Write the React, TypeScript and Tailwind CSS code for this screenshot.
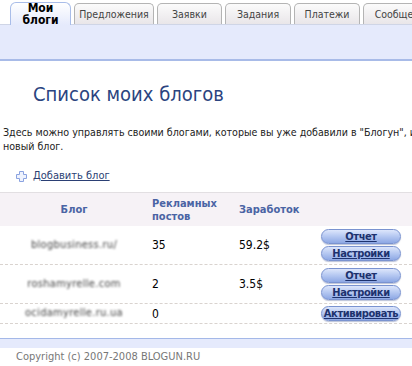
import React from "react";

const tabs = ["Предложения", "Заявки", "Задания", "Платежи", "Сообщения"];

const rows = [
  { name: "blogbusiness.ru/", posts: "35", money: "59.2$", active: true },
  { name: "roshamyrelle.com", posts: "2", money: "3.5$", active: true },
  { name: "ocidamyrelle.ru.ua", posts: "0", money: "", active: false },
];

function PillButton({ label }: { label: string }) {
  return (
    <a
      href="#"
      className="flex h-[15px] w-[80px] items-center justify-center rounded-full border border-[#7a93d0] bg-gradient-to-b from-[#dde6fb] via-[#b4c7f1] to-[#8ea8e4] text-[11px] leading-none font-bold tracking-[-0.4px] text-[#1d326e] underline shadow-[0_1px_1px_rgba(60,80,140,0.35)] [font-family:'DejaVu_Sans_Condensed','Liberation_Sans_Narrow','Liberation_Sans',sans-serif]"
    >
      {label}
    </a>
  );
}

function PlusIcon() {
  return (
    <svg width="11" height="11" viewBox="0 0 11 11">
      <path
        d="M3.5 0.5h4v3h3v4h-3v3h-4v-3h-3v-4h3z"
        fill="#eef2fd"
        stroke="#8aa2e0"
        strokeWidth="1"
      />
    </svg>
  );
}

export default function App() {
  return (
    <div className="h-[366px] w-[412px] overflow-hidden bg-white text-[#333] [font-family:'DejaVu_Sans_Condensed','Liberation_Sans',sans-serif]">
      {/* tabs */}
      <div className="flex h-[24px] items-end gap-[3px] pl-[10px] whitespace-nowrap">
        <div className="relative z-10 -mb-px flex h-[23px] w-[61px] shrink-0 flex-col items-center justify-center rounded-t-[6px] border border-b-0 border-[#a9bde9] bg-gradient-to-b from-white to-[#e5eafc] text-[12px] leading-[11px] font-bold text-black">
          <span>Мои</span>
          <span className="mt-[1px]">блоги</span>
        </div>
        {tabs.map((t) => (
          <div
            key={t}
            className="flex h-[21px] w-[80px] shrink-0 items-center justify-center rounded-t-[5px] border border-b-0 border-[#b4b4b4] bg-gradient-to-b from-[#fbfbfb] to-[#e9e6e9] px-1 pt-[2px] text-[10.5px] text-[#444] [&:nth-child(3)]:w-[65px] [&:nth-child(4)]:w-[66px] [&:nth-child(5)]:w-[66px]"
          >
            {t}
          </div>
        ))}
      </div>
      <div className="h-[37px] border-t border-b-2 border-t-[#cfd5e6] border-b-[#a8bbe8] bg-[#e5eafc]" />

      {/* content */}
      <div className="w-[500px]">
        <h1 className="mt-[20px] pl-[33px] text-[20px] leading-[26px] text-[#2b4480]">
          Список моих блогов
        </h1>
        <p className="mt-[18px] pl-[3px] text-[10.6px] leading-[14px] text-[#222]">
          Здесь можно управлять своими блогами, которые вы уже добавили в "Блогун", или добавить
          новый блог.
        </p>
        <div className="mt-[16px] flex items-center gap-[6px] pl-[16px] text-[11px] leading-[14px]">
          <PlusIcon />
          <a href="#" className="text-[#2b3f74] underline">
            Добавить блог
          </a>
        </div>

        {/* table */}
        <div className="mt-[9px] w-[412px] text-[11px]">
          <div className="grid h-[34px] grid-cols-[148px_87px_83px_1fr] items-center border-t border-[#e2dfe2] bg-[#f6f2f6] font-bold leading-[13px] text-[#4a64a4]">
            <div className="text-center">Блог</div>
            <div className="pl-[4px]">
              Рекламных
              <br />
              постов
            </div>
            <div className="pl-[4px]">Заработок</div>
            <div />
          </div>
          {rows.map((r) => (
            <div
              key={r.name}
              className={`grid grid-cols-[148px_87px_83px_1fr] items-center border-b border-dashed border-[#d9d3cf] ${
                r.active ? "h-[39px]" : "h-[20px]"
              }`}
            >
              <div className="text-center text-[11px] tracking-[0.3px] text-[#444] blur-[0.8px]">
                {r.name}
              </div>
              <div className="pl-[4px] text-[12px] text-black">{r.posts}</div>
              <div className="pl-[4px] text-[12px] text-black">{r.money}</div>
              <div className="flex flex-col items-center gap-[2px] pr-[8px]">
                {r.active ? (
                  <>
                    <PillButton label="Отчет" />
                    <PillButton label="Настройки" />
                  </>
                ) : (
                  <PillButton label="Активировать" />
                )}
              </div>
            </div>
          ))}
        </div>
      </div>

      {/* footer */}
      <div className="mt-[14px] h-[10px] border-t border-[#a4b8e8] bg-[#e5eafc]" />
      <div className="pt-[2px] pl-[16px] text-[11px] leading-[14px] text-[#777]">
        Copyright (c) 2007-2008 BLOGUN.RU
      </div>
    </div>
  );
}
